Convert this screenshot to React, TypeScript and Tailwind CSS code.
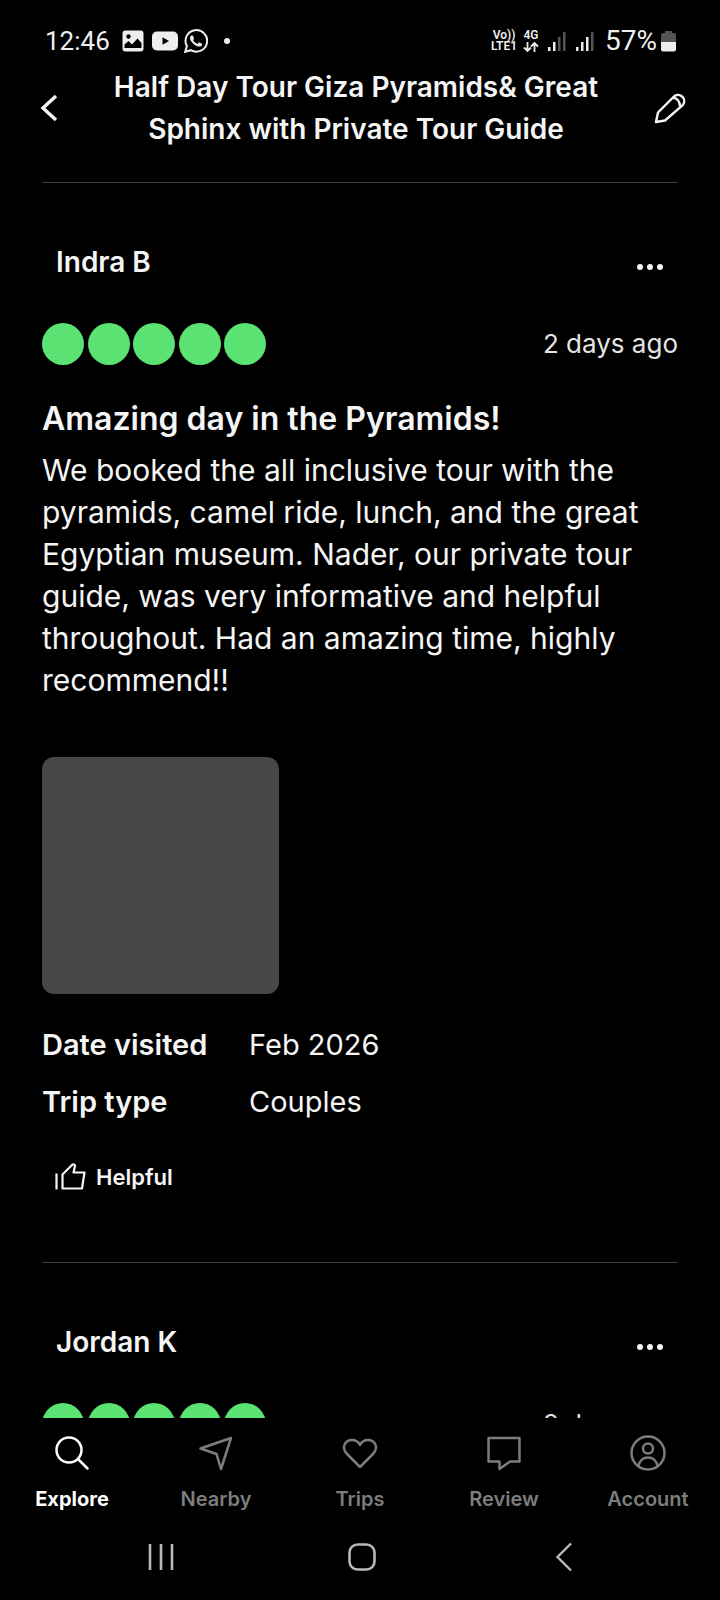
import type { ReactNode } from "react";

const reviews = [
  {
    name: "Indra B",
    rating: 5,
    when: "2 days ago",
    title: "Amazing day in the Pyramids!",
    text: "We booked the all inclusive tour with the pyramids, camel ride, lunch, and the great Egyptian museum. Nader, our private tour guide, was very informative and helpful throughout. Had an amazing time, highly recommend!!",
    visited: "Feb 2026",
    trip: "Couples",
  },
  { name: "Jordan K", rating: 5, when: "2 days ago" },
];

type Review = (typeof reviews)[number];

const tabs: { label: string; active?: boolean; icon: ReactNode }[] = [
  { label: "Explore", active: true, icon: <><circle cx="15" cy="15" r="12.5"/><path d="M24 24l9.5 9.5"/></> },
  { label: "Nearby", icon: <path d="M33 3L2.500 13.500L18.500 19L23 34z"/> },
  { label: "Trips", icon: <path d="M18 32L4.500 18.500C-1 12 3.500 5 10 5c4 0 6.500 2 8 5c1.500-3 4-5 8-5C32.500 5 37 12 31.500 18.500z"/> },
  { label: "Review", icon: <path d="M2.500 3h31v23.500H24L13.500 34v-7.500h-11z"/> },
  { label: "Account", icon: <><circle cx="18" cy="18" r="16.5"/><circle cx="18" cy="13.500" r="5"/><path d="M8.500 31c1-5.500 5-8.500 9.500-8.500s8.500 3 9.500 8.500"/></> },
];

function Signal({ level }: { level: number }) {
  return (
    <svg width="20" height="20" viewBox="0 0 20 20" aria-hidden="true">
      {[4, 9, 14, 19].map((h, i) => (
        <rect key={h} x={i * 5 + 1} y={20 - h} width="2.5" height={h} fill={i < level ? "#eee" : "#555"}/>
      ))}
    </svg>
  );
}

function StatusBar() {
  return (
    <div className="flex h-[66px] shrink-0 items-center justify-between pl-[45px] pr-11 pt-4 text-[26px] leading-8 text-[#eee] font-[Roboto,sans-serif]">
      <div className="flex items-center">
        <span>12:46</span>
        <svg className="ml-3" width="22" height="22" viewBox="0 0 22 22" aria-hidden="true">
          <rect x="0.5" y="0.5" width="21" height="21" rx="3" fill="#eee"/>
          <circle cx="6.5" cy="6.5" r="2.2" fill="#000"/>
          <path d="M2.500 18v-3.500L6.500 11l3.500 3.500L15.500 8.500l4 4.500v5z" fill="#000"/>
        </svg>
        <svg className="ml-2" width="26" height="20" viewBox="0 0 26 20" aria-hidden="true">
          <rect width="26" height="19" y="0.5" rx="5" fill="#eee"/>
          <path d="M10.500 6.200v7.600l6.500-3.800z" fill="#000"/>
        </svg>
        <svg className="ml-1.5" width="24" height="24" viewBox="0 0 24 24" fill="#eee" aria-hidden="true">
          <path d="M17.472 14.382c-.297-.149-1.758-.867-2.030-.967-.273-.099-.471-.148-.670.150-.197.297-.767.966-.940 1.164-.173.199-.347.223-.644.075-.297-.150-1.255-.463-2.390-1.475-.883-.788-1.480-1.761-1.653-2.059-.173-.297-.018-.458.130-.606.134-.133.298-.347.446-.520.149-.174.198-.298.298-.497.099-.198.050-.371-.025-.520-.075-.149-.669-1.612-.916-2.207-.242-.579-.487-.500-.669-.510-.173-.008-.371-.010-.570-.010-.198 0-.520.074-.792.372-.272.297-1.040 1.016-1.040 2.479 0 1.462 1.065 2.875 1.213 3.074.149.198 2.096 3.200 5.077 4.487.709.306 1.262.489 1.694.625.712.227 1.360.195 1.871.118.571-.085 1.758-.719 2.006-1.413.248-.694.248-1.289.173-1.413-.074-.124-.272-.198-.570-.347z"/>
          <path d="M1.200 22.800l1.700-5.700a10.800 10.800 0 1 1 4 4.100z" fill="none" stroke="#eee" strokeWidth="2"/>
        </svg>
        <span className="ml-4 size-1.5 rounded-full bg-[#eee]"/>
      </div>
      <div className="flex items-center">
        <div className="grid grid-cols-[26px_16px] gap-x-1.5 text-center text-[12px] leading-[11px] font-semibold">
          <span>Vo))</span>
          <span>4G</span>
          <span>LTE1</span>
          <svg className="self-center justify-self-center" width="16" height="10" viewBox="0 0 16 10" fill="none" stroke="#eee" strokeWidth="1.8" aria-hidden="true">
            <path d="M4.500 0v9M1 5.500L4.500 9L8 5.500M11.500 10V1M8 4.500L11.500 1L15 4.500"/>
          </svg>
        </div>
        <div className="ml-2 flex gap-2">
          <Signal level={2}/>
          <Signal level={3}/>
        </div>
        <span className="ml-2.5 text-[28px]">57%</span>
        <svg className="ml-1" width="15" height="21" viewBox="0 0 15 21" aria-hidden="true">
          <path d="M4 0h7v2h2q2 0 2 2v7H0V4q0-2 2-2h2z" fill="#555"/>
          <path d="M0 11h15v7.500q0 2-2 2H2q-2 0-2-2z" fill="#eee"/>
        </svg>
      </div>
    </div>
  );
}

function ReviewCard({ review }: { review: Review }) {
  return (
    <article className="border-t border-[#3f3f3f] pb-16 pt-[58px]">
      <div className="flex items-center justify-between px-3.5">
        <h2 className="text-[28px] leading-[42px] font-semibold">{review.name}</h2>
        <button type="button" aria-label="More options" className="pt-2.5">
          <svg width="28" height="8" viewBox="0 0 28 8" fill="currentColor">
            <circle cx="4" cy="4" r="3"/><circle cx="14" cy="4" r="3"/><circle cx="24" cy="4" r="3"/>
          </svg>
        </button>
      </div>
      <div className="mt-10 flex items-center justify-between">
        <div className="flex w-56 justify-between" role="img" aria-label={review.rating + " of 5"}>
          {Array.from({ length: review.rating }, (_, i) => (
            <span key={i} className="size-[42px] rounded-full bg-[#5ae272]"/>
          ))}
        </div>
        <span className="text-[26px] leading-[42px] text-[#e4e4e4]">{review.when}</span>
      </div>
      {review.title && (
        <>
          <h3 className="mt-[33px] text-[32px] leading-[42px] font-semibold">{review.title}</h3>
          <p className="mt-[9px] text-[30px] leading-[42px]">{review.text}</p>
          <div className="mt-14 size-[237px] rounded-xl bg-[#484647]"/>
          <dl className="mt-[30px] grid grid-cols-[207px_1fr] gap-y-[15px] text-[29px] leading-[42px]">
            <dt className="font-semibold">Date visited</dt>
            <dd>{review.visited}</dd>
            <dt className="font-semibold">Trip type</dt>
            <dd>{review.trip}</dd>
          </dl>
          <button type="button" className="ml-3 mt-[33px] flex h-[42px] items-center gap-2.5 text-[22px] font-semibold">
            <svg width="32" height="32" viewBox="0 0 32 32" fill="none" stroke="currentColor" strokeWidth="2.2" strokeLinejoin="round">
              <path d="M2.500 12.500v16M8.500 27.500V13.500L18.500 3.500q2.500-.500 2.500 1.500L19.500 11.500H30.500L28 27.500z"/>
            </svg>
            Helpful
          </button>
        </>
      )}
    </article>
  );
}

export default function App() {
  return (
    <div className="flex h-screen flex-col overflow-hidden bg-black text-[#f5f5f5] font-[Inter,sans-serif]">
      <StatusBar/>
      <header className="flex shrink-0 items-center justify-between pb-8 pl-[38px] pr-[34px]">
        <button type="button" aria-label="Back">
          <svg width="20" height="28" viewBox="0 0 20 28" fill="none" stroke="currentColor" strokeWidth="3.4">
            <path d="M18 2L5 14l13 12"/>
          </svg>
        </button>
        <h1 className="max-w-[540px] text-center text-[28px] leading-[42px] font-semibold">
          Half Day Tour Giza Pyramids&amp; Great Sphinx with Private Tour Guide
        </h1>
        <button type="button" aria-label="Write a review">
          <svg width="32" height="32" viewBox="0 0 32 32" fill="none" stroke="currentColor" strokeWidth="2.4" strokeLinejoin="round">
            <path d="M2 30L4 20.500L20.500 4a6.200 6.200 0 0 1 8.500 8.800L11 28.500z"/>
            <path d="M18.500 5.500c4.500.500 7.500 4 7.500 9"/>
          </svg>
        </button>
      </header>
      <main className="min-h-0 flex-1 overflow-hidden px-[42px]">
        {reviews.map((r) => <ReviewCard key={r.name} review={r}/>)}
      </main>
      <nav className="grid shrink-0 grid-cols-5 pt-[17px]">
        {tabs.map(({ label, active, icon }) => (
          <a key={label} href="#" className={"flex flex-col items-center gap-3.5 text-[20px] leading-7 " + (active ? "font-bold text-white" : "font-semibold text-[#7d7d7d]")}>
            <svg width="36" height="36" viewBox="0 0 36 36" fill="none" stroke="currentColor" strokeWidth="2.5" strokeLinejoin="round" strokeLinecap="round">{icon}</svg>
            {label}
          </a>
        ))}
      </nav>
      <div className="grid h-[87px] shrink-0 grid-cols-3 place-items-center pl-15 pr-14 text-[#b8b8b8]">
        <button type="button" aria-label="Recent apps">
          <svg width="28" height="28" viewBox="0 0 28 28" stroke="currentColor" strokeWidth="2.6"><path d="M3 1v26M14 1v26M25 1v26"/></svg>
        </button>
        <button type="button" aria-label="Home">
          <svg width="28" height="28" viewBox="0 0 28 28" fill="none" stroke="currentColor" strokeWidth="2.6"><rect x="1.5" y="1.5" width="25" height="25" rx="8"/></svg>
        </button>
        <button type="button" aria-label="System back">
          <svg width="18" height="30" viewBox="0 0 18 30" fill="none" stroke="currentColor" strokeWidth="2.4"><path d="M17 1.500L3.500 15L17 28.500"/></svg>
        </button>
      </div>
    </div>
  );
}
